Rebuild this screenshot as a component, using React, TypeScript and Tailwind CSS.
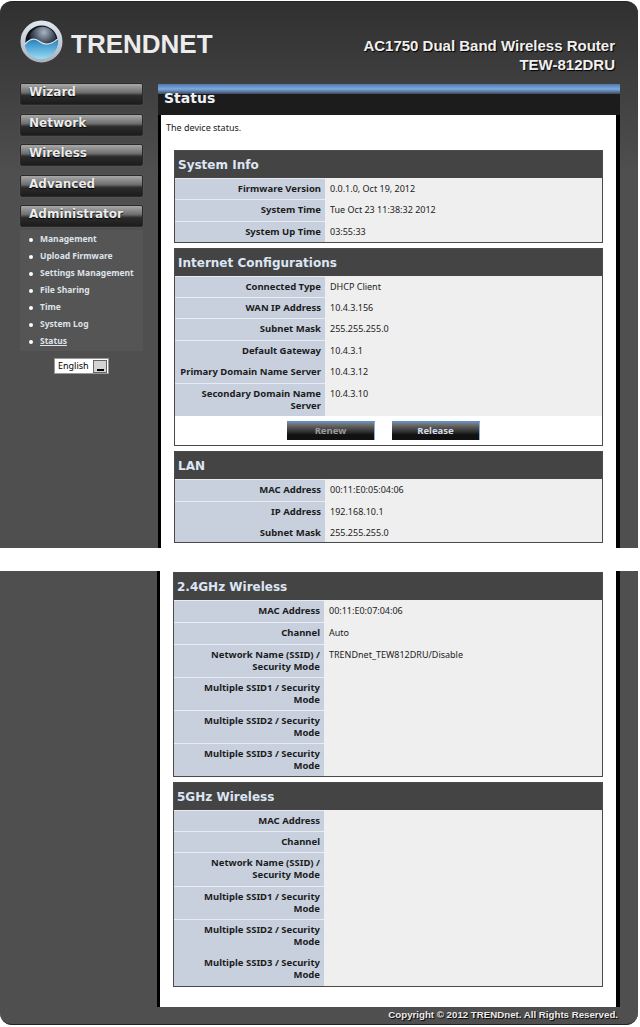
import React from 'react';

type Row = { label: React.ReactNode; value?: string; h: string; flat?: boolean };

const sans = 'font-["Liberation_Sans",Arial,sans-serif]';
const dejavu = 'font-["DejaVu_Sans",Verdana,sans-serif]';
const noto = 'font-["Noto_Sans",Tahoma,sans-serif]';

const navItems = ['Wizard', 'Network', 'Wireless', 'Advanced', 'Administrator'];
const subItems = ['Management', 'Upload Firmware', 'Settings Management', 'File Sharing', 'Time', 'System Log', 'Status'];

const systemInfo: Row[] = [
  { label: 'Firmware Version', value: '0.0.1.0, Oct 19, 2012', h: 'h-[21px]' },
  { label: 'System Time', value: 'Tue Oct 23 11:38:32 2012', h: 'h-[22px]' },
  { label: 'System Up Time', value: '03:55:33', h: 'h-[21px]' },
];

const internet: Row[] = [
  { label: 'Connected Type', value: 'DHCP Client', h: 'h-[21px]' },
  { label: 'WAN IP Address', value: '10.4.3.156', h: 'h-[21px]' },
  { label: 'Subnet Mask', value: '255.255.255.0', h: 'h-[22px]' },
  { label: 'Default Gateway', value: '10.4.3.1', h: 'h-[21px]' },
  { label: 'Primary Domain Name Server', value: '10.4.3.12', h: 'h-[22px]', flat: true },
  { label: 'Secondary Domain Name Server', value: '10.4.3.10', h: 'h-[33px]' },
];

const lan: Row[] = [
  { label: 'MAC Address', value: '00:11:E0:05:04:06', h: 'h-[22px]' },
  { label: 'IP Address', value: '192.168.10.1', h: 'h-[21px]' },
  { label: 'Subnet Mask', value: '255.255.255.0', h: 'h-[20px]', flat: true },
];

const wireless24: Row[] = [
  { label: 'MAC Address', value: '00:11:E0:07:04:06', h: 'h-[22px]' },
  { label: 'Channel', value: 'Auto', h: 'h-[22px]' },
  { label: 'Network Name (SSID) / Security Mode', value: 'TRENDnet_TEW812DRU/Disable', h: 'h-[33px]' },
  { label: 'Multiple SSID1 / Security Mode', h: 'h-[33px]' },
  { label: 'Multiple SSID2 / Security Mode', h: 'h-[33px]' },
  { label: 'Multiple SSID3 / Security Mode', h: 'h-[33px]' },
];

const wireless5: Row[] = [
  { label: 'MAC Address', h: 'h-[21px]' },
  { label: 'Channel', h: 'h-[21px]' },
  { label: 'Network Name (SSID) / Security Mode', h: 'h-[34px]' },
  { label: 'Multiple SSID1 / Security Mode', h: 'h-[33px]' },
  { label: 'Multiple SSID2 / Security Mode', h: 'h-[33px]' },
  { label: 'Multiple SSID3 / Security Mode', h: 'h-[34px]', flat: true },
];

function Logo() {
  return (
    <svg width="43" height="43" viewBox="0 0 44 44" className="shrink-0">
      <defs>
        <radialGradient id="sphere" cx="0.55" cy="0.2" r="0.6">
          <stop offset="0" stopColor="#a9b6c6" />
          <stop offset="0.55" stopColor="#4e5a68" />
          <stop offset="1" stopColor="#12161c" />
        </radialGradient>
        <linearGradient id="water" x1="0" y1="0" x2="0" y2="1">
          <stop offset="0" stopColor="#1f7fbe" />
          <stop offset="1" stopColor="#9bdcf5" />
        </linearGradient>
        <linearGradient id="ring" x1="0" y1="0" x2="0" y2="1">
          <stop offset="0" stopColor="#dfe5ec" />
          <stop offset="1" stopColor="#aab4c0" />
        </linearGradient>
      </defs>
      <circle cx="22" cy="22" r="19" fill="#11151a" stroke="url(#ring)" strokeWidth="5" />
      <circle cx="23" cy="21" r="14" fill="url(#sphere)" />
      <path d="M5 25c5-6 10-7 15-3s11 4 19-3c1 11-7 21-17 21S6 34 5 25z" fill="url(#water)" />
      <path d="M5 25c5-6 10-7 15-3s11 4 19-3" fill="none" stroke="#dfe9f2" strokeWidth="1.2" />
    </svg>
  );
}

function NavButton({ label }: { label: string }) {
  return (
    <div className="h-[22px] w-[123px] rounded-[2px] border border-[#2a2a2a] bg-[linear-gradient(#a8a8a8_0%,#707070_42%,#2c2c2c_58%,#1c1c1c_100%)] pl-[8px] shadow-[0_0_1px_#777]">
      <span className={`${dejavu} block text-[12px] leading-[17px] font-bold text-[#ececec] [text-shadow:0_1px_1px_#000]`}>{label}</span>
    </div>
  );
}

function Sidebar() {
  return (
    <div className="-mt-[1px] flex w-[158px] shrink-0 flex-col pl-[20px]">
      <div className="flex flex-col gap-[8.5px]">
        {navItems.map((item) => (
          <NavButton key={item} label={item} />
        ))}
      </div>
      <ul className="mt-[3px] flex h-[121px] w-[123px] flex-col justify-between bg-[#555555] py-[2px] pl-[9px]">
        {subItems.map((item) => (
          <li key={item} className="flex h-[15px] items-center gap-[7px] whitespace-nowrap">
            <span className="h-[4px] w-[4px] shrink-0 rounded-full bg-white" />
            <span className={`${noto} text-[8.5px] font-bold text-[#dfe3ea] ${item === 'Status' ? 'underline' : ''}`}>{item}</span>
          </li>
        ))}
      </ul>
      <div className="mt-[7px] ml-[34px] flex h-[16px] w-[55px] items-center justify-between border border-[#999] bg-white pr-[1px] pl-[3px]">
        <span className={`${noto} text-[9px] text-black`}>English</span>
        <span className="flex h-[13px] w-[14px] items-end justify-center border border-[#666] bg-[#d4d4d4] pb-[1px]">
          <span className="h-[2px] w-[7px] bg-black" />
        </span>
      </div>
    </div>
  );
}

function InfoTable({ title, rows, children }: { title: string; rows: Row[]; children?: React.ReactNode }) {
  return (
    <div className="w-full border border-[#4a4a4a] bg-white">
      <div className="flex h-[27px] items-center bg-[#444444] pl-[3px]">
        <h2 className={`${dejavu} text-[12px] font-bold text-[#dce6f5]`}>{title}</h2>
      </div>
      <div className="flex flex-col">
        {rows.map((row, i) => (
          <div key={i} className={`flex ${row.h}`}>
            <div className={`${noto} w-[150px] shrink-0 border-t bg-[#c8d0de] pt-[4px] pr-[4px] pl-[4px] text-right text-[9.5px] leading-[12px] font-bold text-[#1c1c1c] ${row.flat ? 'border-[#c8d0de]' : 'border-[#e8ecf2]'}`}>
              {row.label}
            </div>
            <div className={`${noto} flex-1 border-t border-[#efefef] bg-[#efefef] pt-[4px] pl-[5px] text-[9px] leading-[12px] text-[#222]`}>{row.value}</div>
          </div>
        ))}
      </div>
      {children}
    </div>
  );
}

function ActionButton({ label, dim }: { label: string; dim?: boolean }) {
  return (
    <div className={`${noto} h-[19px] w-[88px] border-t-2 border-r border-t-[#5d8fc4] border-r-[#8fb0d2] bg-[linear-gradient(#7c7c7c_0%,#3a3a3a_45%,#111_70%,#111_100%)] pt-[1px] text-center text-[9.5px] leading-[14px] font-bold ${dim ? 'text-[#9a9a9a]' : 'text-[#d6dce6]'}`}>
      {label}
    </div>
  );
}

export default function App() {
  return (
    <div className="flex h-[1027px] w-[640px] flex-col overflow-hidden bg-white">
      {/* first printed page */}
      <div className="mt-[1px] h-[547px] w-[638px] rounded-t-[12px] border-t border-[#222] bg-[linear-gradient(#303030,#4f4f4f_170px)]">
        <div className="flex h-[82px] items-start justify-between pt-[18px] pr-[23px] pl-[20px]">
          <div className="flex items-center gap-[8px]">
            <Logo />
            <span className={`${sans} pt-[5px] text-[26px] leading-none font-bold text-[#ececec]`}>TRENDNET</span>
          </div>
          <div className={`${sans} pt-[16px] text-right text-[15px] leading-[19px] font-bold text-[#f0f0f0] [text-shadow:1px_1px_1px_#000]`}>
            <div>AC1750 Dual Band Wireless Router</div>
            <div>TEW-812DRU</div>
          </div>
        </div>
        <div className="flex">
          <Sidebar />
          <div className="h-[464px] w-[462px] overflow-hidden">
            <div className="h-[10px] bg-[linear-gradient(#4d79ad,#7fa9e0_50%,#3c4a5c)]" />
            <div className="flow-root h-[21px] bg-[#1c1c1c] pl-[6px]">
              <h1 className={`${dejavu} -mt-[5px] text-[14px] leading-[18px] font-bold text-[#eef2f8]`}>Status</h1>
            </div>
            <div className="h-[433px] border-r-4 border-l-[3px] border-black bg-white px-[13px] pt-[7px]">
              <p className={`${noto} -ml-[8px] text-[9px] leading-[12px] text-[#222]`}>The device status.</p>
              <div className="mt-[16px] flex flex-col gap-[5px]">
                <InfoTable title="System Info" rows={systemInfo} />
                <InfoTable title="Internet Configurations" rows={internet}>
                  <div className="flex h-[29px] items-center justify-center gap-[17px] pr-[10px]">
                    <ActionButton label="Renew" dim />
                    <ActionButton label="Release" />
                  </div>
                </InfoTable>
                <InfoTable title="LAN" rows={lan} />
              </div>
            </div>
          </div>
        </div>
      </div>

      {/* second printed page */}
      <div className="mt-[23px] flex h-[454px] w-[638px] rounded-b-[12px] border-b border-[#222] bg-[#4f4f4f]">
        <div className="w-[157px] shrink-0" />
        <div className="w-[463px]">
          <div className="h-[436px] border-r-4 border-l-[3px] border-black bg-white px-[13px] pt-[1px]">
            <div className="flex flex-col gap-[5px]">
              <InfoTable title="2.4GHz Wireless" rows={wireless24} />
              <InfoTable title="5GHz Wireless" rows={wireless5} />
            </div>
          </div>
          <p className={`${sans} pt-[1px] pr-[2px] text-right text-[9.7px] leading-[13px] font-bold text-[#ececec] [text-shadow:1px_1px_1px_#000]`}>
            Copyright © 2012 TRENDnet. All Rights Reserved.
          </p>
        </div>
      </div>
    </div>
  );
}
